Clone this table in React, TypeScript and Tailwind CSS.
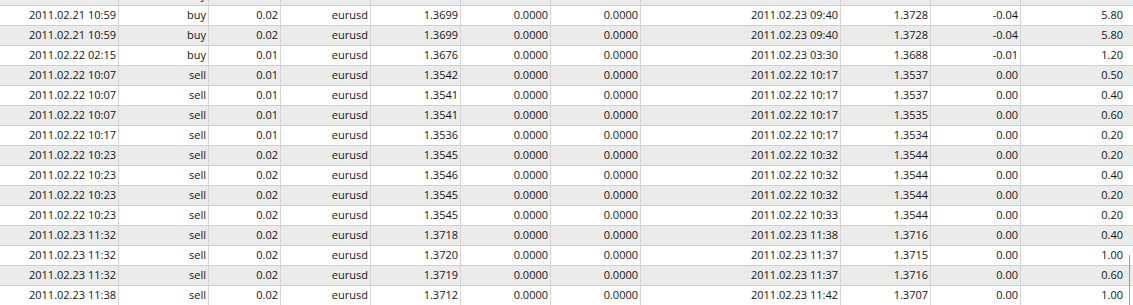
import React from "react";

const rows: string[][] = [
  ["", "buy", "", "", "", "", "", "", "", "", ""],
  ["2011.02.21 10:59", "buy", "0.02", "eurusd", "1.3699", "0.0000", "0.0000", "2011.02.23 09:40", "1.3728", "-0.04", "5.80"],
  ["2011.02.21 10:59", "buy", "0.02", "eurusd", "1.3699", "0.0000", "0.0000", "2011.02.23 09:40", "1.3728", "-0.04", "5.80"],
  ["2011.02.22 02:15", "buy", "0.01", "eurusd", "1.3676", "0.0000", "0.0000", "2011.02.23 03:30", "1.3688", "-0.01", "1.20"],
  ["2011.02.22 10:07", "sell", "0.01", "eurusd", "1.3542", "0.0000", "0.0000", "2011.02.22 10:17", "1.3537", "0.00", "0.50"],
  ["2011.02.22 10:07", "sell", "0.01", "eurusd", "1.3541", "0.0000", "0.0000", "2011.02.22 10:17", "1.3537", "0.00", "0.40"],
  ["2011.02.22 10:07", "sell", "0.01", "eurusd", "1.3541", "0.0000", "0.0000", "2011.02.22 10:17", "1.3535", "0.00", "0.60"],
  ["2011.02.22 10:17", "sell", "0.01", "eurusd", "1.3536", "0.0000", "0.0000", "2011.02.22 10:17", "1.3534", "0.00", "0.20"],
  ["2011.02.22 10:23", "sell", "0.02", "eurusd", "1.3545", "0.0000", "0.0000", "2011.02.22 10:32", "1.3544", "0.00", "0.20"],
  ["2011.02.22 10:23", "sell", "0.02", "eurusd", "1.3546", "0.0000", "0.0000", "2011.02.22 10:32", "1.3544", "0.00", "0.40"],
  ["2011.02.22 10:23", "sell", "0.02", "eurusd", "1.3545", "0.0000", "0.0000", "2011.02.22 10:32", "1.3544", "0.00", "0.20"],
  ["2011.02.22 10:23", "sell", "0.02", "eurusd", "1.3545", "0.0000", "0.0000", "2011.02.22 10:33", "1.3544", "0.00", "0.20"],
  ["2011.02.23 11:32", "sell", "0.02", "eurusd", "1.3718", "0.0000", "0.0000", "2011.02.23 11:38", "1.3716", "0.00", "0.40"],
  ["2011.02.23 11:32", "sell", "0.02", "eurusd", "1.3720", "0.0000", "0.0000", "2011.02.23 11:37", "1.3715", "0.00", "1.00"],
  ["2011.02.23 11:32", "sell", "0.02", "eurusd", "1.3719", "0.0000", "0.0000", "2011.02.23 11:37", "1.3716", "0.00", "0.60"],
  ["2011.02.23 11:38", "sell", "0.02", "eurusd", "1.3712", "0.0000", "0.0000", "2011.02.23 11:42", "1.3707", "0.00", "1.00"],
];

const App = () => {
  return (
    <div
      className="relative w-[1133px] h-[305px] overflow-hidden bg-white text-[11px] text-[#151515]"
      style={{ fontFamily: '"Open Sans", "Noto Sans", sans-serif' }}
    >
      <div className="-mt-[14px]">
        {rows.map((row, i) => (
          <div
            key={i}
            className={`grid grid-cols-[119px_90px_72px_90px_90px_90px_90px_200px_90px_90px_1fr] h-[20px] border-b border-[#cfcfcf] ${
              i % 2 === 0 ? "bg-[#ebebeb]" : "bg-white"
            }`}
          >
            {row.map((cell, j) => (
              <div
                key={j}
                className={`flex items-center justify-end leading-none pb-[2px] ${
                  j === 10 ? "pr-[10px]" : "pr-[2px] border-r border-[#d6d6d6]"
                }`}
              >
                {cell}
              </div>
            ))}
          </div>
        ))}
      </div>
      <div className="absolute left-[1129px] top-[255px] bottom-0 w-px bg-[#9c9c9c]" />
    </div>
  );
};

export default App;
